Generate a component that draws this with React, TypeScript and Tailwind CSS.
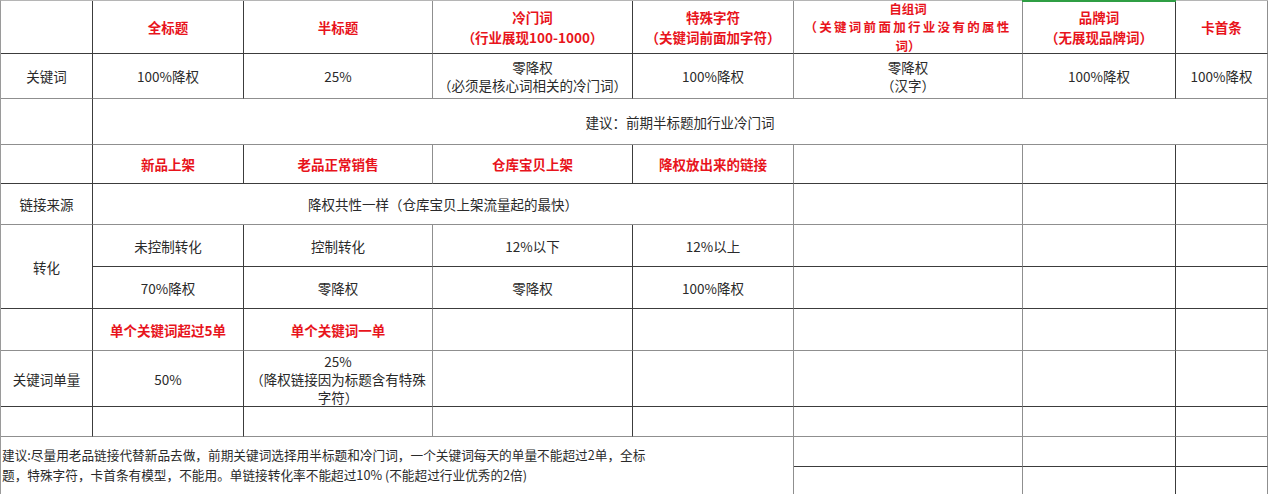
import React from "react";

type Kind = "h" | "b" | "note";
type CellDef = {
  t?: React.ReactNode;
  cs?: number;
  rs?: number;
  kind?: Kind;
  green?: boolean;
};

const colRight = ["d", "d", "g", "d", "g", "g", "d", "g"];
const rowBottom = ["d", "g", "g", "d", "g", "d", "d", "g", "d", "g", "d", "n"];

const rightCls: Record<string, string> = {
  d: "border-r border-r-[#3c3c3c]",
  g: "border-r border-r-[#8f8f8f]",
};
const bottomCls: Record<string, string> = {
  d: "border-b border-b-[#3c3c3c]",
  g: "border-b border-b-[#8f8f8f]",
  n: "",
};
const colSpanCls: Record<number, string> = {
  1: "",
  2: "col-span-2",
  4: "col-span-4",
  5: "col-span-5",
  7: "col-span-7",
};
const rowSpanCls: Record<number, string> = { 1: "", 2: "row-span-2" };

const H = (lines: React.ReactNode[] | string, extra?: Partial<CellDef>): CellDef => ({
  t: Array.isArray(lines) ? (
    <>
      {lines.map((l, i) => (
        <div key={i}>{l}</div>
      ))}
    </>
  ) : (
    lines
  ),
  kind: "h",
  ...extra,
});

const B = (lines: string[] | string, extra?: Partial<CellDef>): CellDef => ({
  t: Array.isArray(lines) ? (
    <>
      {lines.map((l, i) => (
        <div key={i}>{l}</div>
      ))}
    </>
  ) : (
    lines
  ),
  kind: "b",
  ...extra,
});

const E: CellDef = { kind: "b" };

const rows: CellDef[][] = [
  [
    E,
    H("全标题"),
    H("半标题"),
    H(["冷门词", "（行业展现100-1000）"]),
    H(["特殊字符", "（关键词前面加字符）"]),
    {
      kind: "h",
      t: (
        <div className="text-[12.5px] leading-[18.5px] mt-[1px]">
          <div>自组词</div>
          <div className="tracking-[2.3px]">（关键词前面加行业没有的属性</div>
          <div>词）</div>
        </div>
      ),
    },
    H(["品牌词", "（无展现品牌词）"], { green: true }),
    H("卡首条"),
  ],
  [
    B("关键词"),
    B("100%降权"),
    B("25%"),
    B(["零降权", "（必须是核心词相关的冷门词）"]),
    B("100%降权"),
    B(["零降权", "（汉字）"]),
    B("100%降权"),
    B("100%降权"),
  ],
  [E, B("建议：前期半标题加行业冷门词", { cs: 7 })],
  [E, H("新品上架"), H("老品正常销售"), H("仓库宝贝上架"), H("降权放出来的链接"), E, E, E],
  [B("链接来源"), B("降权共性一样（仓库宝贝上架流量起的最快）", { cs: 4 }), E, E, E],
  [B("转化", { rs: 2 }), B("未控制转化"), B("控制转化"), B("12%以下"), B("12%以上"), E, E, E],
  [B("70%降权"), B("零降权"), B("零降权"), B("100%降权"), E, E, E],
  [E, H("单个关键词超过5单"), H("单个关键词一单"), E, E, E, E, E],
  [
    B("关键词单量"),
    B("50%"),
    B(["25%", "（降权链接因为标题含有特殊", "字符）"]),
    E,
    E,
    E,
    E,
    E,
  ],
  [E, E, E, E, E, E, E, E],
  [
    {
      kind: "note",
      cs: 5,
      rs: 2,
      t: (
        <>
          <div>建议:尽量用老品链接代替新品去做，前期关键词选择用半标题和冷门词，一个关键词每天的单量不能超过2单，全标</div>
          <div>题，特殊字符，卡首条有模型，不能用。单链接转化率不能超过10% (不能超过行业优秀的2倍)</div>
        </>
      ),
    },
    E,
    E,
    E,
  ],
  [E, E, E],
];

function buildCells() {
  const occ: boolean[][] = Array.from({ length: 12 }, () => Array(8).fill(false));
  const out: React.ReactNode[] = [];
  rows.forEach((row, r) => {
    let c = 0;
    row.forEach((cell, i) => {
      while (c < 8 && occ[r][c]) c++;
      const cs = cell.cs ?? 1;
      const rs = cell.rs ?? 1;
      for (let rr = r; rr < r + rs; rr++)
        for (let cc = c; cc < c + cs; cc++) occ[rr][cc] = true;
      const endC = c + cs - 1;
      const endR = r + rs - 1;
      const kind = cell.kind ?? "b";
      let content = "";
      if (kind === "h")
        content =
          "flex flex-col items-center justify-center text-center text-[#e8141c] font-bold text-[13.5px] leading-[20px]";
      else if (kind === "b")
        content =
          "flex flex-col items-center justify-center text-center text-[#2a2a2a] text-[13.5px] leading-[18px]";
      else content = "block text-left text-[#2a2a2a] text-[12.67px] leading-[20px] pt-[8px] pl-[1px] whitespace-nowrap";
      out.push(
        <div
          key={`${r}-${i}`}
          className={[
            "relative overflow-visible",
            colSpanCls[cs],
            rowSpanCls[rs],
            rightCls[colRight[endC]],
            bottomCls[rowBottom[endR]],
            content,
          ].join(" ")}
        >
          {cell.green && (
            <div className="absolute left-[-1px] right-[-1px] top-[-1px] h-[2px] bg-[#2f9e44]" />
          )}
          {cell.t}
        </div>
      );
      c += cs;
    });
  });
  return out;
}

export default function App() {
  return (
    <div className="w-[1268px] h-[494px] overflow-hidden bg-white font-['Noto_Sans_CJK_SC','Noto_Sans',sans-serif]">
      <div className="grid grid-cols-[92px_151px_189px_200px_161px_229px_153px_92px] grid-rows-[53px_45px_46px_39px_41px_42px_42px_42px_56px_30px_30px_27px] border-t border-t-[#b5b5b5] border-l border-l-[#9a9a9a] w-[1268px]">
        {buildCells()}
      </div>
    </div>
  );
}
